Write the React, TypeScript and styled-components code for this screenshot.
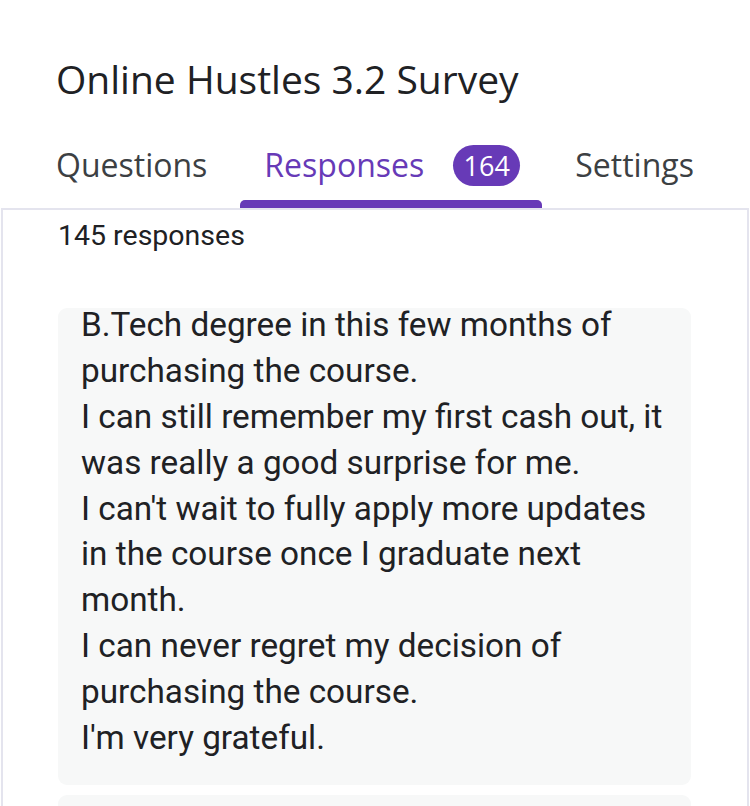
import React from "react";
import styled, { createGlobalStyle } from "styled-components";

const Global = createGlobalStyle`
  html, body { margin: 0; padding: 0; background: #ffffff; }
  body { font-family: Roboto, "Liberation Sans", sans-serif; color: #202124; }
  * { box-sizing: border-box; }
`;

const Page = styled.div`
  width: 750px;
  height: 806px;
  overflow: hidden;
  background: #ffffff;
`;

const Header = styled.header`
  padding: 51px 0 0 56px;
`;

const Title = styled.h1`
  margin: 0;
  font-family: "Open Sans", Roboto, sans-serif;
  font-weight: 400;
  font-size: 39px;
  line-height: 56px;
  color: #202124;
`;

const TabBar = styled.nav`
  display: flex;
  align-items: stretch;
  margin-top: 18px;
  padding-left: 56px;
  height: 83px;
`;

const Tab = styled.div<{ $active?: boolean; $gap: number; $padL: number; $padR: number }>`
  position: relative;
  display: flex;
  align-items: center;
  gap: 29px;
  margin-left: ${(p) => p.$gap}px;
  padding: 0 ${(p) => p.$padR}px 4px ${(p) => p.$padL}px;
  font-family: "Open Sans", Roboto, sans-serif;
  font-size: 32px;
  color: ${(p) => (p.$active ? "#673ab7" : "#3c4043")};
  &::after {
    content: "";
    display: ${(p) => (p.$active ? "block" : "none")};
    position: absolute;
    left: 0;
    right: 0;
    bottom: 0;
    height: 8px;
    border-radius: 5px 5px 0 0;
    background: #673ab7;
  }
`;

const Badge = styled.span`
  display: inline-flex;
  align-items: center;
  justify-content: center;
  height: 41px;
  min-width: 67px;
  margin-top: 2px;
  padding: 0 8px;
  border-radius: 21px;
  background: #673ab7;
  color: #ffffff;
  font-family: "Open Sans", Roboto, sans-serif;
  font-size: 27px;
`;

const Panel = styled.section`
  margin: 0 1px;
  border: 2px solid #e4e4ee;
  border-bottom: none;
  padding: 8px 56px 0 55px;
  min-height: 600px;
`;

const Count = styled.div`
  font-size: 28.5px;
  line-height: 36px;
  color: #202124;
`;

const ResponseList = styled.div`
  display: flex;
  flex-direction: column;
  gap: 10px;
  margin-top: 54px;
`;

const ResponseCard = styled.div`
  background: #f7f8f8;
  border-radius: 9px;
  padding: 0 10px 25px 23px;
  min-height: 40px;
`;

const ResponseText = styled.p`
  margin: -5.6px 0 0;
  font-size: 33.3px;
  line-height: 45.8px;
  color: #202124;
  white-space: pre-line;
`;

const text = `B.Tech degree in this few months of
purchasing the course.
I can still remember my first cash out, it
was really a good surprise for me.
I can't wait to fully apply more updates
in the course once I graduate next
month.
I can never regret my decision of
purchasing the course.
I'm very grateful.`;

export default function App() {
  return (
    <Page>
      <Global />
      <Header>
        <Title>Online Hustles 3.2 Survey</Title>
      </Header>
      <TabBar>
        <Tab $gap={0} $padL={0} $padR={0}>Questions</Tab>
        <Tab $gap={33} $padL={24} $padR={22} $active>
          Responses
          <Badge>164</Badge>
        </Tab>
        <Tab $gap={33} $padL={0} $padR={0}>Settings</Tab>
      </TabBar>
      <Panel>
        <Count>145 responses</Count>
        <ResponseList>
          <ResponseCard>
            <ResponseText>{text}</ResponseText>
          </ResponseCard>
          <ResponseCard />
        </ResponseList>
      </Panel>
    </Page>
  );
}
